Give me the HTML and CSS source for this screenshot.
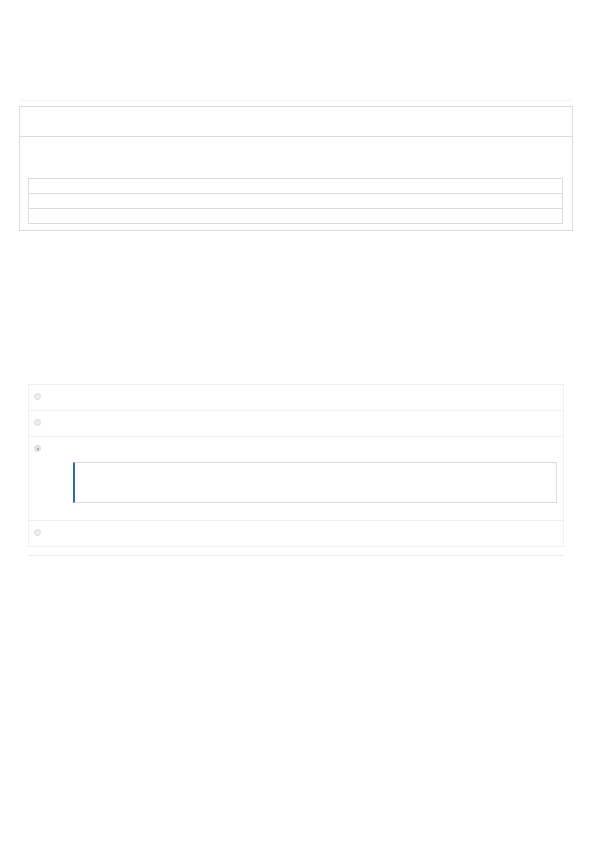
FILE: index.html
```html
<!DOCTYPE html>
<html>
<head>
<meta charset="utf-8">
<link rel="stylesheet" href="styles.css">
</head>
<body>
<div class="page">
  <div class="rule-top"></div>
  <div class="panel">
    <div class="panel-head"></div>
    <div class="panel-body">
      <div class="tbl">
        <div class="tr"></div>
        <div class="tr"></div>
        <div class="tr"></div>
      </div>
    </div>
  </div>
  <div class="list">
    <div class="item"><span class="radio"></span></div>
    <div class="item"><span class="radio"></span></div>
    <div class="item item-open">
      <span class="radio checked"></span>
      <div class="quote"></div>
    </div>
    <div class="item"><span class="radio"></span></div>
  </div>
  <div class="rule-bottom"></div>
</div>
</body>
</html>
```
FILE: styles.css
```css
html, body {
  margin: 0;
  padding: 0;
  background: #fff;
  font-family: "Liberation Sans", Arial, sans-serif;
}
.page {
  padding: 100px 21px 0 19px;
}
.rule-top {
  height: 1px;
  background: #f4f4f4;
}
.panel {
  margin-top: 5px;
  border: 1px solid #dcdcdc;
}
.panel-head {
  height: 29px;
  border-bottom: 1px solid #dcdcdc;
}
.panel-body {
  padding: 41px 9px 6px 8px;
}
.tbl {
  border: 1px solid #dcdcdc;
}
.tr {
  height: 14px;
}
.tr + .tr {
  border-top: 1px solid #dcdcdc;
}
.list {
  margin: 153px 9px 0 9px;
  border: 1px solid #f1f1f1;
}
.item {
  height: 25px;
  box-sizing: border-box;
  padding: 8px 0 0 5px;
}
.item + .item {
  height: 26px;
  border-top: 1px solid #f1f1f1;
}
.item.item-open {
  height: 84px;
}
.radio {
  display: block;
  position: relative;
  box-sizing: border-box;
  width: 7px;
  height: 7px;
  border-radius: 50%;
  background: #eeeeee;
  border: 1px solid #dadada;
}
.radio.checked {
  background: #e6e6e6;
}
.radio.checked::after {
  content: "";
  position: absolute;
  left: 1.5px;
  top: 1.5px;
  width: 2px;
  height: 2px;
  border-radius: 50%;
  background: #999;
}
.quote {
  margin: 10px 6px 0 39px;
  height: 39px;
  border: 1px solid #dcdcdc;
  border-left: 2px solid #2f6aa6;
}
.rule-bottom {
  margin: 8px 9px 0 9px;
  height: 1px;
  background: #ececec;
}
```
